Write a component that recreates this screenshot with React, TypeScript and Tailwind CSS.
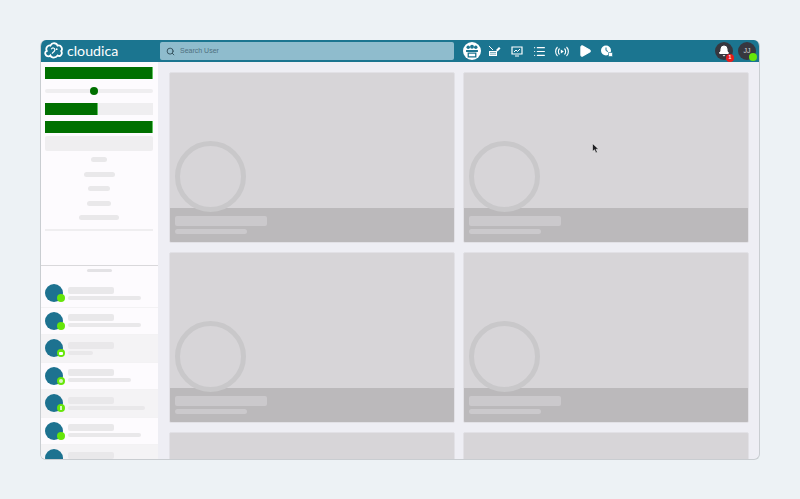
import React from "react";
import { Search, List, Bell, Play } from "lucide-react";

const rows = [
  { sub: "w-[73px]", bg: "bg-[#fdfbfe]", glyph: "" },
  { sub: "w-[73px]", bg: "bg-[#fdfbfe]", glyph: "" },
  { sub: "w-[25px]", bg: "bg-[#f4f3f5]", glyph: "chat" },
  { sub: "w-[63px]", bg: "bg-[#fdfbfe]", glyph: "gear" },
  { sub: "w-[77px]", bg: "bg-[#f4f3f5]", glyph: "info" },
  { sub: "w-[73px]", bg: "bg-[#fdfbfe]", glyph: "" },
  { sub: "w-[60px]", bg: "bg-[#f4f3f5]", glyph: "" },
];

const pills = ["w-[16px]", "w-[31px]", "w-[22px]", "w-[24px]", "w-[40px]"];

const Logo = () => (
  <svg width="20" height="18" viewBox="0 0 22 20" fill="none" stroke="white" strokeWidth="2">
    <path d="M5 16 C1 16 0 11 3 10 C1 6 5 3 7 4 C9 0 14 1 15 4 C19 3 21 8 19 10 C21 13 18 17 15 15 C13 18 8 18 7 15 C6 16 6 16 5 16 Z" />
    <path d="M8 8 C9 6 12 6 12 9 C12 11 9 11 9 13" strokeWidth="1.3" />
    <circle cx="14" cy="8" r="1" fill="white" stroke="none" />
  </svg>
);

const IconCell = ({ children }: { children: React.ReactNode }) => (
  <div className="flex w-[22.5px] justify-center">{children}</div>
);

const Header = () => (
  <header className="flex h-[22px] shrink-0 items-center bg-[#1b7590]">
    <div className="flex w-[119px] items-center gap-[3px] pl-[3px]">
      <Logo />
      <span className="font-['Lato',sans-serif] text-[14.2px] leading-none text-white">cloudica</span>
    </div>
    <div className="flex h-[18px] w-[294px] items-center gap-[5px] rounded-[2px] bg-[#8fbccd] pl-[6px]">
      <Search size={9} strokeWidth={2.5} className="text-[#33505c]" />
      <span className="font-['Liberation_Sans',sans-serif] text-[7px] text-[#4f7080]">Search User</span>
    </div>
    <div className="ml-[7px] flex items-center">
      <IconCell>
        <div className="flex h-[18px] w-[18px] items-center justify-center rounded-full bg-white">
          <svg width="14" height="14" viewBox="0 0 13 13" fill="#1b7590">
            <circle cx="3" cy="3" r="1.6" />
            <circle cx="6.5" cy="2.5" r="1.8" />
            <circle cx="10" cy="3" r="1.6" />
            <path d="M1 5.5h11v2H1z" />
            <path d="M3 8.5h7v3.5H3z" fill="none" stroke="#1b7590" strokeWidth="1.2" />
          </svg>
        </div>
      </IconCell>
      <IconCell>
        <svg width="13" height="12" viewBox="0 0 13 12" fill="white">
          <path d="M1 1l4 4" stroke="white" strokeWidth="1" />
          <path d="M1 6h8v5H1z" />
          <path d="M8 5l3-3 1.5 1.5-3 3z" />
          <path d="M2 7.5h6M2 9.2h6" stroke="#1b7590" strokeWidth="0.6" />
        </svg>
      </IconCell>
      <IconCell>
        <svg width="12" height="11" viewBox="0 0 12 11" fill="none" stroke="white">
          <path d="M1 1h10v7H1z" strokeWidth="1.2" />
          <path d="M3 6l2-2 1.5 1.5L9 3" strokeWidth="1" />
          <path d="M4 10h4" strokeWidth="1.2" />
        </svg>
      </IconCell>
      <IconCell>
        <List size={13} strokeWidth={2.2} className="text-white" />
      </IconCell>
      <IconCell>
        <svg width="16" height="11" viewBox="0 0 16 11" fill="none" stroke="white" strokeWidth="1.1">
          <path d="M3.5 1C1 3.5 1 7.5 3.5 10M5.5 2.5C4 4 4 7 5.5 8.5M12.5 1C15 3.5 15 7.5 12.5 10M10.5 2.5C12 4 12 7 10.5 8.5" />
          <path d="M6.8 3.5l3 2-3 2z" fill="white" stroke="none" />
        </svg>
      </IconCell>
      <IconCell>
        <Play size={14} fill="white" className="text-white" />
      </IconCell>
      <IconCell>
        <svg width="12" height="12" viewBox="0 0 12 12">
          <circle cx="5" cy="5.5" r="5" fill="white" />
          <path d="M5 2.5v3l2 1" fill="none" stroke="#1b7590" strokeWidth="1" />
          <path d="M7.5 7.5h4v4h-4z" fill="white" stroke="#1b7590" strokeWidth="0.6" />
        </svg>
      </IconCell>
    </div>
    <div className="ml-auto flex items-center gap-[5px] pr-[3px]">
      <div className="relative flex h-[18px] w-[18px] items-center justify-center rounded-full bg-[#37373f]">
        <Bell size={12} fill="white" className="text-white" />
        <span className="absolute -bottom-[2px] -right-[1px] flex h-[8px] w-[8px] items-center justify-center rounded-full bg-[#e81c1c] font-['Liberation_Sans',sans-serif] text-[5px] font-bold text-white">
          1
        </span>
      </div>
      <div className="relative flex h-[18px] w-[18px] items-center justify-center rounded-full bg-[#37373f] font-['Liberation_Sans',sans-serif] text-[7px] text-[#d8d8d8]">
        JJ
        <span className="absolute -bottom-[1px] -right-[1px] h-[8px] w-[8px] rounded-full bg-[#66e60a]" />
      </div>
    </div>
  </header>
);

const Sidebar = () => (
  <aside className="flex w-[117px] shrink-0 flex-col overflow-hidden bg-[#fdfbfe]">
    <div className="flex h-[203px] shrink-0 flex-col pl-[4px] pr-[5px] pt-[5px]">
      <div className="h-[12px] border-r border-[#5fc45f] bg-[#007000]" />
      <div className="mt-[10px] flex h-[4px] items-center rounded-full bg-[#efeef0]">
        <div className="ml-[45px] h-[8px] w-[8px] rounded-full bg-[#007000]" />
      </div>
      <div className="mt-[10px] flex h-[12px] bg-[#efeef0]">
        <div className="w-[53px] border-r border-[#5fc45f] bg-[#007000]" />
      </div>
      <div className="mt-[6px] h-[12px] border-r border-[#5fc45f] bg-[#007000]" />
      <div className="mt-[3px] h-[15px] rounded-[2px] bg-[#efeef0]" />
      <div className="mt-[6px] flex flex-col items-center gap-[9.5px]">
        {pills.map((w, i) => (
          <div key={i} className={`h-[5px] rounded-full bg-[#e9e8ea] ${w}`} />
        ))}
      </div>
      <div className="mt-[9px] h-[2px] bg-[#efeef0]" />
    </div>
    <div className="flex min-h-0 flex-1 flex-col overflow-hidden border-t border-[#d9d8db]">
      <div className="flex h-[14px] shrink-0 justify-center pt-[3px]">
        <div className="h-[3px] w-[25px] rounded-full bg-[#e3e2e5]" />
      </div>
      {rows.map((r, i) => (
        <div key={i} className={`flex h-[27.5px] shrink-0 items-center gap-[5px] border-b border-[#f3f2f4] px-[4px] ${r.bg}`}>
          <div className="relative h-[18px] w-[18px] shrink-0 rounded-full bg-[#1d7290]">
            <span className="absolute bottom-0 -right-[2px] flex h-[8px] w-[8px] items-center justify-center rounded-full bg-[#66e60a]">
              {r.glyph === "chat" && <span className="h-[3px] w-[4px] rounded-[1px] bg-white" />}
              {r.glyph === "gear" && <span className="h-[4px] w-[4px] rounded-full bg-[#d8f5c0]" />}
              {r.glyph === "info" && <span className="h-[4px] w-[1.5px] bg-[#d8f5c0]" />}
            </span>
          </div>
          <div className="flex flex-col gap-[2px]">
            <div className="h-[7px] w-[46px] rounded-[2px] bg-[#e9e8ea]" />
            <div className={`h-[4px] rounded-full bg-[#e9e8ea] ${r.sub}`} />
          </div>
        </div>
      ))}
    </div>
  </aside>
);

const Card = () => (
  <div className="relative flex h-[171px] flex-col overflow-hidden rounded-[2px] border border-[#e2e1e6] bg-[#d7d5d8]">
    <div className="flex-1" />
    <div className="flex h-[34px] shrink-0 flex-col gap-[3px] bg-[#bbb9bb] pl-[5px] pt-[8px]">
      <div className="h-[10px] w-[92px] rounded-[2px] bg-[#cbc9cc]" />
      <div className="h-[5px] w-[72px] rounded-full bg-[#cbc9cc]" />
    </div>
    <div className="absolute left-[5px] top-[68px] h-[71px] w-[71px] rounded-full border-[5px] border-[#c9c8ca]" />
  </div>
);

const Cursor = () => (
  <svg className="absolute left-[551px] top-[103px]" width="8" height="11" viewBox="0 0 8 11">
    <path d="M0.5 0.5v8l2-1.8 1.4 3.2 1.5-.7-1.4-3h2.6z" fill="#1f1f22" stroke="#ffffff" strokeWidth="0.5" />
  </svg>
);

export default function App() {
  return (
    <div className="h-[499px] w-[800px] overflow-hidden bg-[#edf2f5] pl-[40px] pt-[40px]">
      <div className="relative flex h-[420px] w-[720px] flex-col overflow-hidden rounded-[6px] border-b border-l border-r border-[#c9cdd1] bg-[#eeeef4]">
        <Header />
        <div className="flex min-h-0 flex-1">
          <Sidebar />
          <main className="min-w-0 flex-1 overflow-hidden pl-[11px] pt-[10px]">
            <div className="grid grid-cols-[286px_286px] gap-x-[8px] gap-y-[9px]">
              {[0, 1, 2, 3, 4, 5].map((i) => (
                <Card key={i} />
              ))}
            </div>
          </main>
        </div>
        <Cursor />
      </div>
    </div>
  );
}
